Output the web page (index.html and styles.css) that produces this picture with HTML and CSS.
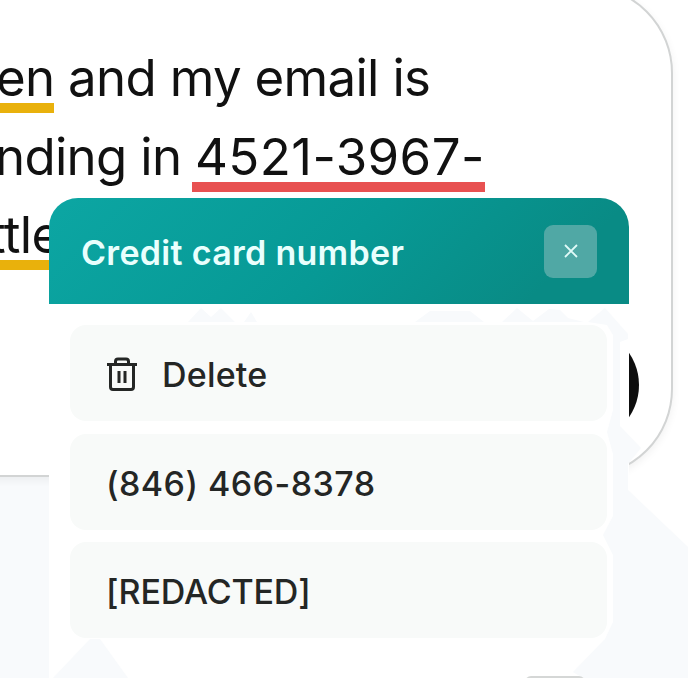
FILE: index.html
```
<!DOCTYPE html>
<html lang="en">
<head>
    <meta charset="UTF-8">
    <meta name="viewport" content="width=device-width, initial-scale=1.0">
    <title>Credit card number</title>
    <link rel="stylesheet" href="styles.css">
</head>
<body>
    <div class="page">
        <!-- Message box -->
        <div class="composer">
            <div class="message">
                <p class="line line-1"><span class="mark warning">en</span> and my email is</p>
                <p class="line line-2">nding in <span class="mark danger">4521-3967-</span></p>
                <p class="line line-3"><span class="mark warning">ttle</span></p>
            </div>
            <button class="send-button" aria-label="Send"></button>
        </div>

        <!-- Replacement menu -->
        <div class="menu">
            <div class="menu-header">
                <h2>Credit card number</h2>
                <button class="close-button" aria-label="Close">
                    <svg width="14" height="14" viewBox="0 0 14 14">
                        <path d="M1 1L13 13M13 1L1 13" fill="none" stroke="currentColor" stroke-width="1.8"/>
                    </svg>
                </button>
            </div>
            <div class="menu-list">
                <button class="menu-item">
                    <svg class="trash" width="32" height="36" viewBox="0 0 32 36" fill="none" stroke="currentColor" stroke-width="3" stroke-linejoin="round">
                        <path d="M1 7.5H31M4.5 7.5V30Q4.5 32.5 7 32.5H25Q27.5 32.5 27.5 30V7.5M9.5 7.5V4.5Q9.5 2 12 2H20Q22.5 2 22.5 4.5V7.5"/>
                        <path d="M13 14V26M19 14V26"/>
                    </svg>
                    <span>Delete</span>
                </button>
                <button class="menu-item phone"><span>(846) 466-8378</span></button>
                <button class="menu-item redacted"><span>[REDACTED]</span></button>
            </div>
        </div>

        <!-- Pale background shapes -->
        <svg class="shapes" width="688" height="678" viewBox="0 0 688 678">
            <path d="M605 308L628 334V339L620 342V426L641 448L628 464V490L688 547V678H583L573 672L605 639L613 622V555L603 535L613 516V454L607 432L613 410V335L607 325L588 322Z"/>
            <path d="M53 678L90 639H100L128 678Z"/>
            <path d="M188 322L201 308L211 317L221 308L235 322ZM244 322L251 312L257 322Z"/>
            <path d="M415 322L430 311H470L484 322ZM502 322L517 308L533 321L549 309L560 310L568 318L584 322Z"/>
        </svg>
        <div class="bottom-tab"></div>
    </div>
</body>
</html>
```
FILE: styles.css
```
* {
    margin: 0;
    padding: 0;
    box-sizing: border-box;
}

body {
    font-family: 'Inter', sans-serif;
    background-color: #FFFFFF;
    color: #111111;
    overflow: hidden;
}

button {
    font-family: inherit;
    border: none;
    cursor: pointer;
}

.page {
    position: relative;
    width: 688px;
    height: 678px;
    overflow: hidden;
    background: linear-gradient(90deg, #F8FAFC 49px, #FFFFFF 49px);
}

/* Message box */
.composer {
    display: flex;
    flex-direction: column;
    justify-content: space-between;
    width: 773px;
    height: 492px;
    margin: -15px 0 0 -100px;
    padding: 52px 32px 33px 98px;
    background-color: #FFFFFF;
    border: 2px solid #D2D4D4;
    border-radius: 88px;
    box-shadow: 0 3px 9px rgba(0, 0, 0, 0.06);
}

.line {
    font-size: 51px;
    line-height: 78.5px;
    letter-spacing: -0.7px;
    white-space: nowrap;
}

.line-1 {
    margin-left: -4px;
}

.line-2 {
    margin-left: -5px;
}

.line-3 {
    margin-left: -11px;
}

.mark {
    display: inline-block;
    height: 74px;
    border-bottom: 10px solid;
}

.mark.warning {
    border-color: #E9B10C;
}

.mark.danger {
    margin-left: -3px;
    padding-left: 3px;
    border-color: #E85151;
    letter-spacing: 0.4px;
}

.send-button {
    align-self: flex-end;
    flex-shrink: 0;
    width: 114px;
    height: 114px;
    border-radius: 50%;
    background-color: #0E0E0E;
}

/* Replacement menu */
.menu {
    position: absolute;
    top: 198px;
    left: 49px;
    width: 580px;
    height: 500px;
    background-color: #FFFFFF;
    border-radius: 29px 29px 0 0;
    overflow: hidden;
}

.menu-header {
    display: flex;
    align-items: center;
    justify-content: space-between;
    height: 106px;
    padding: 0 32px;
    background: linear-gradient(135deg, #0CA6A3, #079995 50%, #098B85 85%);
}

.menu-header h2 {
    padding-top: 2px;
    font-size: 34px;
    font-weight: 600;
    letter-spacing: 0.3px;
    color: #E9FFFD;
}

.close-button {
    display: flex;
    align-items: center;
    justify-content: center;
    width: 53px;
    height: 53px;
    border-radius: 9px;
    background-color: #50A8A5;
    color: #E0FAF8;
}

.menu-list {
    display: flex;
    flex-direction: column;
    gap: 12.5px;
    padding: 21px 22px 0 21px;
}

.menu-item {
    display: flex;
    align-items: center;
    gap: 24px;
    height: 96px;
    padding: 3px 36px 0;
    border-radius: 16px;
    background-color: #F8FAF9;
    color: #242625;
    font-size: 34px;
    font-weight: 500;
    letter-spacing: 0.2px;
}

.menu-item.phone {
    letter-spacing: 0.45px;
}

.menu-item.redacted {
    letter-spacing: -0.15px;
}

.shapes {
    position: absolute;
    inset: 0;
    fill: #F8FAFC;
    pointer-events: none;
}

.bottom-tab {
    position: absolute;
    left: 525px;
    top: 676px;
    width: 60px;
    height: 12px;
    border-radius: 8px;
    background-color: #D5D7D6;
}
```
